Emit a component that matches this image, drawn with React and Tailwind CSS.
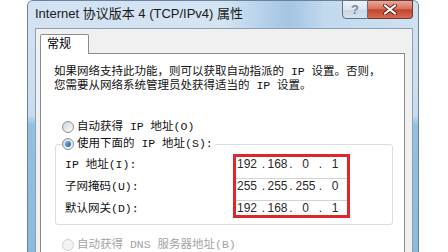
import React from "react";

const mono = "font-[family-name:'Liberation_Mono','Noto_Sans_CJK_SC',monospace]";
const sans = "font-[family-name:'Liberation_Sans','Noto_Sans_CJK_SC',sans-serif]";

function Radio({ checked, disabled }) {
  return (
    <span
      className={
        disabled
          ? "w-[12px] h-[12px] rounded-full border border-[#d0d0d0] bg-[#f3f3f3] flex items-center justify-center shrink-0"
          : "w-[12px] h-[12px] rounded-full border border-[#8e9297] bg-gradient-to-br from-[#d4d4d4] to-[#fbfbfb] flex items-center justify-center shrink-0"
      }
    >
      {checked && (
        <span className="w-[6px] h-[6px] rounded-full bg-gradient-to-br from-[#7cc0f0] to-[#1a5aa2]" />
      )}
    </span>
  );
}

function IpRow({ parts, last }) {
  const widths = ["w-[18px]", "w-[15px]", "w-[13px]", "w-[14px]", "w-[15px]", "w-[15px]", "w-[14px]"];
  const items = [parts[0], ".", parts[1], ".", parts[2], ".", parts[3]];
  return (
    <div
      className={
        last
          ? "h-[14px] flex pl-[2px] leading-[15px]"
          : "h-[22px] flex pl-[2px] leading-[15px] border-b border-[#cfd3d8]"
      }
    >
      {items.map((t, i) => (
        <span key={i} className={`${widths[i]} flex justify-center`}>
          {t}
        </span>
      ))}
    </div>
  );
}

export default function App() {
  return (
    <div className="w-[448px] h-[252px] bg-white overflow-hidden flex">
      {/* window */}
      <div className="ml-[27px] w-[392px] h-[260px] shrink-0 border-x border-t border-[#6a829b] rounded-t-[6px] bg-[linear-gradient(to_bottom,#d3e3f2_0%,#c9dcef_44%,#93c0df_48%,#8bbbdb_100%)] flex flex-col">
        {/* title bar */}
        <div className="h-[27px] shrink-0 flex items-start bg-[linear-gradient(to_right,#d2e2f2_0%,#d4e4f3_50%,#b6d1ea_60%,#a4c5e3_67%,#c2d9ee_76%,#d0e1f1_100%)] rounded-t-[5px]">
          <div className={`${sans} pl-[7px] pt-[5px] text-[13px] leading-[16px] text-[#1a1a1a]`}>
            Internet 协议版本 4 (TCP/IPv4) 属性
          </div>
          <div className="ml-auto mr-[5px] -mt-[1px] flex">
            <div className="w-[26px] h-[19px] border border-[#5f7185] rounded-bl-[4px] bg-[linear-gradient(to_bottom,#eef3f8_0%,#dbe5ef_50%,#c8d6e4_51%,#d6e2ee_100%)] flex items-center justify-center">
              <span className={`${sans} font-bold text-[13px] leading-[13px] text-[#7a8898]`}>?</span>
            </div>
            <div className="w-[45px] h-[19px] border border-l-0 border-[#6a3a36] rounded-br-[4px] bg-[linear-gradient(to_bottom,#e8a999_0%,#d7735f_45%,#c5432f_52%,#d86a4f_100%)] flex items-center justify-center">
              <svg width="14" height="11" viewBox="0 0 14 11">
                <path d="M2 1.5 L12 9.5 M12 1.5 L2 9.5" stroke="#5a2a26" strokeWidth="4" strokeLinecap="round" />
                <path d="M2 1.5 L12 9.5 M12 1.5 L2 9.5" stroke="#ffffff" strokeWidth="2.2" strokeLinecap="round" />
              </svg>
            </div>
          </div>
        </div>

        {/* frame body */}
        <div className="flex-1 flex pl-[7px] pr-[5px]">
          <div className="flex-1 border-x border-t border-[#8d9fb3] bg-[#f0f0f0] pt-[5px] pl-[4px] pr-[7px] flex flex-col">
            {/* tab */}
            <div className="flex">
              <div className={`${mono} w-[49px] h-[20px] border border-b-0 border-[#898c95] rounded-t-[2px] bg-white -mb-[1px] relative z-10 pl-[6px] pt-[2px] text-[12px] leading-[16px] text-black`}>
                常规
              </div>
            </div>
            {/* panel */}
            <div className={`${mono} flex-1 border border-[#898c95] bg-white pl-[13px] pt-[11px] text-[11.5px] leading-[14px] text-[#111]`}>
              <div>如果网络支持此功能，则可以获取自动指派的 IP 设置。否则，</div>
              <div>您需要从网络系统管理员处获得适当的 IP 设置。</div>

              <div className="mt-[26px] ml-[8px] h-[16px] flex items-center gap-[3px]">
                <Radio />
                <span>自动获得 IP 地址(O)</span>
              </div>

              <fieldset className="mt-[1px] ml-[1px] w-[338px] border border-[#d5dfe5] rounded-[3px] pl-[6px] pb-[6px]">
                <legend className="h-[16px] flex items-center gap-[3px] pr-[2px]">
                  <Radio checked />
                  <span>使用下面的 IP 地址(S):</span>
                </legend>
                <div className="mt-[2px] ml-[3px] flex">
                  <div className="w-[168px] pt-[3px] flex flex-col">
                    <div className="h-[22px] leading-[15px]">IP 地址(I):</div>
                    <div className="h-[22px] leading-[15px]">子网掩码(U):</div>
                    <div className="h-[14px] leading-[15px]">默认网关(D):</div>
                  </div>
                  <div className={`${sans} w-[117px] border-[3px] border-[#e1262b] text-[12px] text-[#2a2a2a] flex flex-col`}>
                    <IpRow parts={["192", "168", "0", "1"]} />
                    <IpRow parts={["255", "255", "255", "0"]} />
                    <IpRow parts={["192", "168", "0", "1"]} last />
                  </div>
                </div>
              </fieldset>

              <div className="mt-[12px] ml-[8px] h-[16px] flex items-center gap-[3px] text-[#a3a3a3]">
                <Radio disabled />
                <span>自动获得 DNS 服务器地址(B)</span>
              </div>
            </div>
          </div>
        </div>
      </div>
    </div>
  );
}
